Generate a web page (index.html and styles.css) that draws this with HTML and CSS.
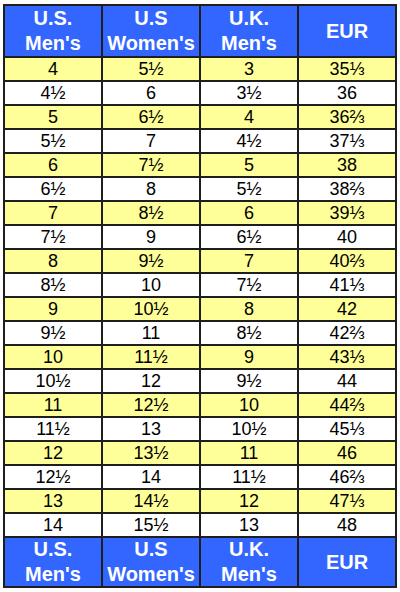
FILE: index.html
```html
<!DOCTYPE html>
<html>
<head>
<meta charset="utf-8">
<link rel="stylesheet" href="styles.css">
</head>
<body>
<div class="chart">
  <div class="hd">U.S.<br>Men's</div><div class="hd">U.S<br>Women's</div><div class="hd">U.K.<br>Men's</div><div class="hd">EUR</div>
  <div class="c y">4</div><div class="c y">5½</div><div class="c y">3</div><div class="c y">35⅓</div>
  <div class="c">4½</div><div class="c">6</div><div class="c">3½</div><div class="c">36</div>
  <div class="c y">5</div><div class="c y">6½</div><div class="c y">4</div><div class="c y">36⅔</div>
  <div class="c">5½</div><div class="c">7</div><div class="c">4½</div><div class="c">37⅓</div>
  <div class="c y">6</div><div class="c y">7½</div><div class="c y">5</div><div class="c y">38</div>
  <div class="c">6½</div><div class="c">8</div><div class="c">5½</div><div class="c">38⅔</div>
  <div class="c y">7</div><div class="c y">8½</div><div class="c y">6</div><div class="c y">39⅓</div>
  <div class="c">7½</div><div class="c">9</div><div class="c">6½</div><div class="c">40</div>
  <div class="c y">8</div><div class="c y">9½</div><div class="c y">7</div><div class="c y">40⅔</div>
  <div class="c">8½</div><div class="c">10</div><div class="c">7½</div><div class="c">41⅓</div>
  <div class="c y">9</div><div class="c y">10½</div><div class="c y">8</div><div class="c y">42</div>
  <div class="c">9½</div><div class="c">11</div><div class="c">8½</div><div class="c">42⅔</div>
  <div class="c y">10</div><div class="c y">11½</div><div class="c y">9</div><div class="c y">43⅓</div>
  <div class="c">10½</div><div class="c">12</div><div class="c">9½</div><div class="c">44</div>
  <div class="c y">11</div><div class="c y">12½</div><div class="c y">10</div><div class="c y">44⅔</div>
  <div class="c">11½</div><div class="c">13</div><div class="c">10½</div><div class="c">45⅓</div>
  <div class="c y">12</div><div class="c y">13½</div><div class="c y">11</div><div class="c y">46</div>
  <div class="c">12½</div><div class="c">14</div><div class="c">11½</div><div class="c">46⅔</div>
  <div class="c y">13</div><div class="c y">14½</div><div class="c y">12</div><div class="c y">47⅓</div>
  <div class="c">14</div><div class="c">15½</div><div class="c">13</div><div class="c">48</div>
  <div class="hd">U.S.<br>Men's</div><div class="hd">U.S<br>Women's</div><div class="hd">U.K.<br>Men's</div><div class="hd">EUR</div>
</div>
</body>
</html>
```
FILE: styles.css
```css
html, body {
  margin: 0;
  padding: 0;
  background: #ffffff;
}
.chart {
  margin: 4px 0 0 3px;
  width: 394px;
  box-sizing: border-box;
  padding: 2px;
  background: #1e1e1e;
  display: grid;
  grid-template-columns: repeat(4, 1fr);
  grid-template-rows: 50px repeat(20, 22px) 48px;
  gap: 2px;
  font-family: "Liberation Sans", Arial, sans-serif;
}
.hd {
  background: #3366ff;
  color: #ffffff;
  font-weight: bold;
  font-size: 20px;
  line-height: 25px;
  display: flex;
  align-items: center;
  justify-content: center;
  text-align: center;
}
.c {
  background: #ffffff;
  color: #000000;
  font-size: 18px;
  line-height: 18px;
  display: flex;
  align-items: center;
  justify-content: center;
}
.c.y {
  background: #ffff99;
}
```
